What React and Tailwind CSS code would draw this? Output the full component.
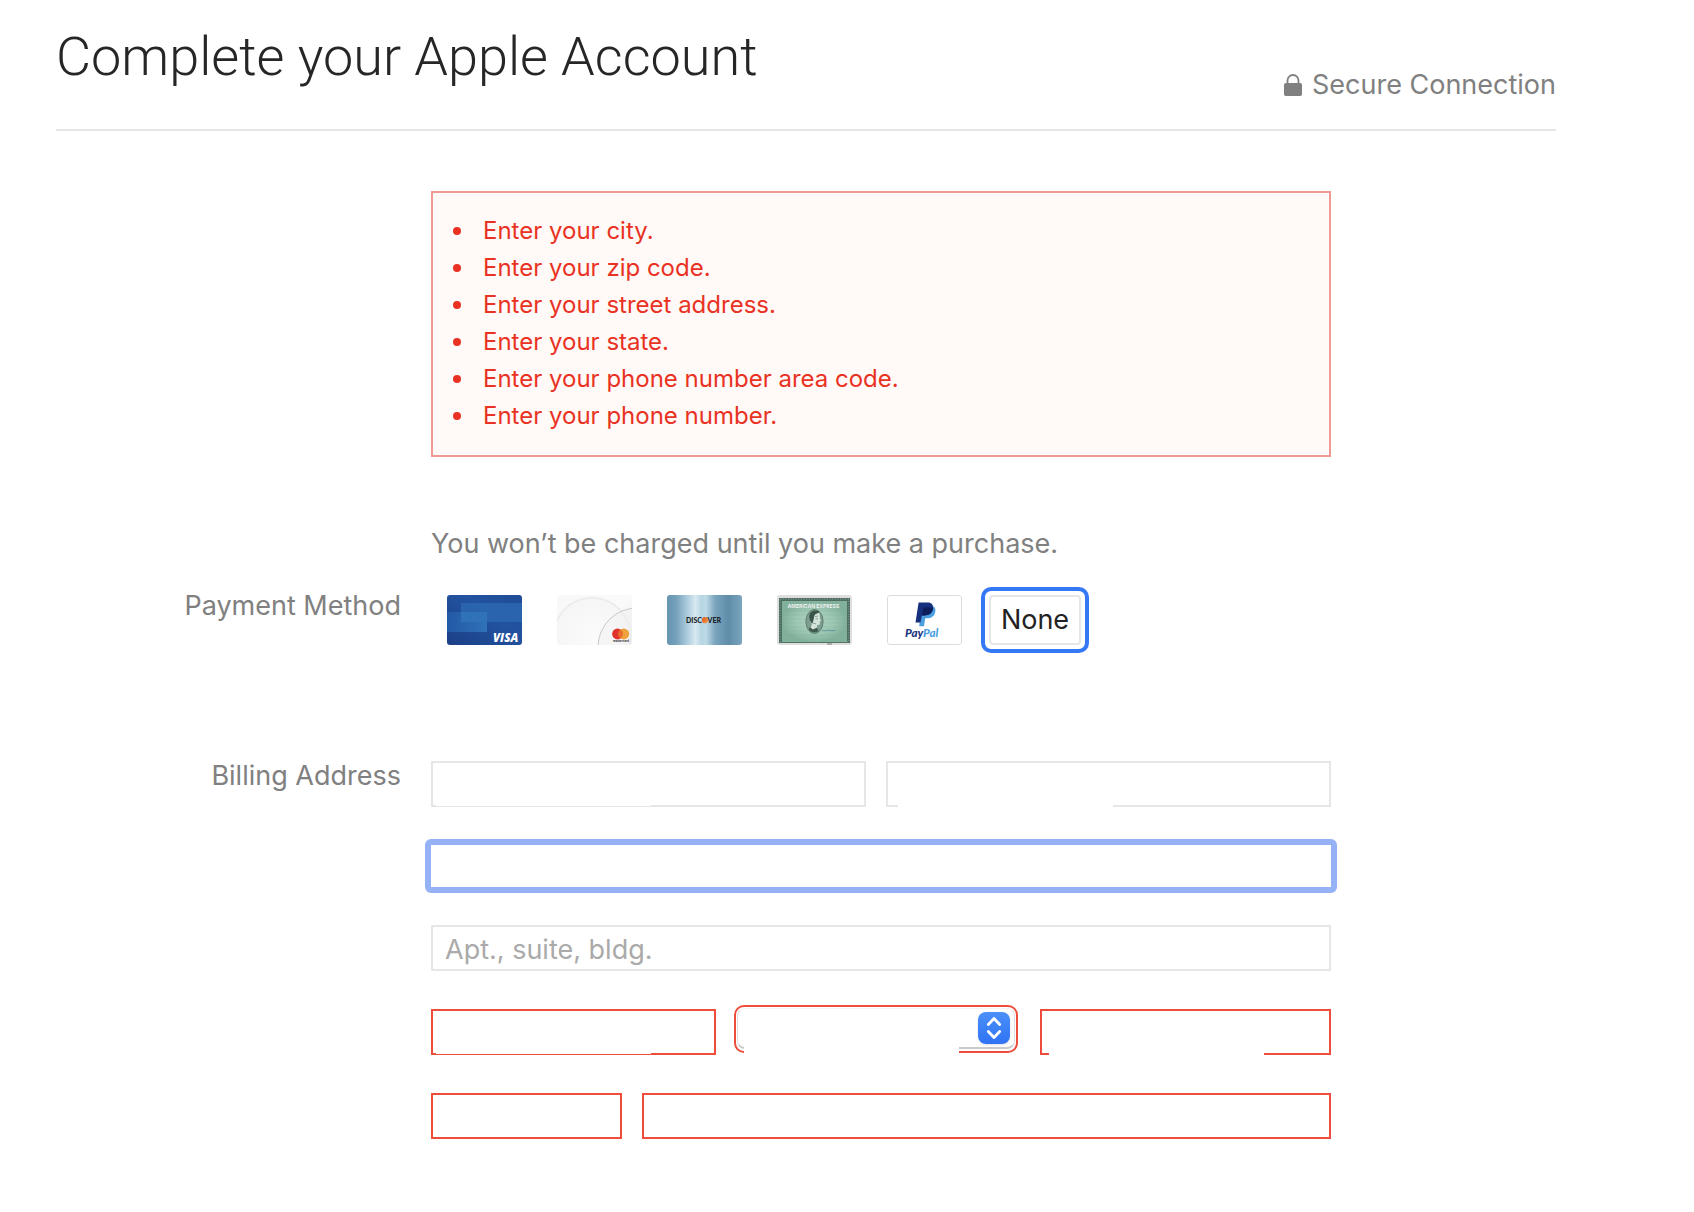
import React from "react";

const errors = [
  "Enter your city.",
  "Enter your zip code.",
  "Enter your street address.",
  "Enter your state.",
  "Enter your phone number area code.",
  "Enter your phone number.",
];

const VisaCard = () => (
  <svg viewBox="0 0 75 50" className="block h-[50px] w-[75px] rounded-[3px]" aria-hidden="true">
    <defs>
      <linearGradient id="visa-bg" x1="0" y1="1" x2="1" y2="0">
        <stop offset="0" stopColor="#1b3f86" />
        <stop offset="0.6" stopColor="#2253a0" />
        <stop offset="1" stopColor="#1f4c96" />
      </linearGradient>
      <linearGradient id="visa-band" x1="0" y1="0" x2="1" y2="0">
        <stop offset="0" stopColor="#2358a6" />
        <stop offset="1" stopColor="#2f72b8" />
      </linearGradient>
    </defs>
    <rect width="75" height="50" fill="url(#visa-bg)" />
    <rect x="14" y="8" width="61" height="19" fill="#2a64ae" />
    <rect x="0" y="17" width="40" height="20" fill="url(#visa-band)" />
    <rect x="14" y="17" width="26" height="10" fill="#2f72b8" />
    <text x="46" y="47" fill="#fff" fontFamily="Open Sans, sans-serif" fontSize="11.5" fontWeight="800" fontStyle="italic">VISA</text>
  </svg>
);

const MastercardCard = () => (
  <svg viewBox="0 0 75 50" className="block h-[50px] w-[75px] rounded-[3px]" aria-hidden="true">
    <defs>
      <linearGradient id="mc-bg" x1="0" y1="0" x2="1" y2="1">
        <stop offset="0" stopColor="#f8f8f8" />
        <stop offset="0.5" stopColor="#fafafa" />
        <stop offset="1" stopColor="#ececec" />
      </linearGradient>
      <radialGradient id="mc-disc">
        <stop offset="0" stopColor="#fbfbfb" />
        <stop offset="0.94" stopColor="#f6f6f6" />
        <stop offset="1" stopColor="#e4e4e4" />
      </radialGradient>
    </defs>
    <rect width="75" height="50" fill="url(#mc-bg)" />
    <circle cx="35" cy="41" r="39" fill="url(#mc-disc)" />
    <circle cx="80" cy="52" r="39" fill="#f1f1f1" fillOpacity="0.4" stroke="#b5b5b5" strokeWidth="0.7" />
    <circle cx="60.5" cy="39" r="5.4" fill="#e0322b" />
    <circle cx="66.8" cy="39" r="5.4" fill="#efa13b" />
    <path d="M63.65 34.6a5.4 5.4 0 0 1 0 8.8a5.4 5.4 0 0 1 0-8.8z" fill="#ea6a2c" />
    <text x="56" y="47" fill="#333" fontFamily="Open Sans, sans-serif" fontSize="2.8" fontWeight="700">mastercard</text>
  </svg>
);

const DiscoverCard = () => (
  <svg viewBox="0 0 75 50" className="block h-[50px] w-[75px] rounded-[3px]" aria-hidden="true">
    <defs>
      <linearGradient id="disc-bg" x1="0" y1="0" x2="1" y2="0">
        <stop offset="0" stopColor="#6695b2" />
        <stop offset="0.12" stopColor="#74a1bb" />
        <stop offset="0.25" stopColor="#a4c6d8" />
        <stop offset="0.38" stopColor="#d8e9f1" />
        <stop offset="0.46" stopColor="#b6d5e3" />
        <stop offset="0.52" stopColor="#bddae6" />
        <stop offset="0.64" stopColor="#7ba5be" />
        <stop offset="0.82" stopColor="#5f8ca9" />
        <stop offset="1" stopColor="#79a5bd" />
      </linearGradient>
      <linearGradient id="disc-o" x1="0" y1="0" x2="1" y2="1">
        <stop offset="0" stopColor="#d9531e" />
        <stop offset="1" stopColor="#f6a04d" />
      </linearGradient>
    </defs>
    <rect width="75" height="50" fill="url(#disc-bg)" />
    <g fill="#1d2327" fontFamily="Lato, sans-serif" fontSize="7" fontWeight="900">
      <text x="19" y="28">DISC</text>
      <text x="40.5" y="28">VER</text>
    </g>
    <circle cx="38" cy="25.2" r="3.1" fill="url(#disc-o)" />
  </svg>
);

const AmexCard = () => (
  <svg viewBox="0 0 75 50" className="block h-[50px] w-[75px] rounded-[3px]" aria-hidden="true">
    <defs>
      <radialGradient id="amex-bg">
        <stop offset="0" stopColor="#b4d6c7" />
        <stop offset="0.6" stopColor="#9cc7b2" />
        <stop offset="1" stopColor="#82b19b" />
      </radialGradient>
    </defs>
    <rect width="75" height="50" fill="#dedede" />
    <rect x="2" y="3" width="71" height="45" fill="#4d6e60" />
    <rect x="3.2" y="4.2" width="68.6" height="42.6" fill="none" stroke="#86a899" strokeWidth="1" strokeDasharray="1 1.6" />
    <rect x="5" y="6" width="65" height="41" fill="url(#amex-bg)" />
    <path d="M5 16h65M5 20h65M5 24h65M5 28h65M5 32h65M5 36h65M5 40h65" stroke="#7fae98" strokeWidth="0.4" opacity="0.6" />
    <text x="10.5" y="13" fill="#fff" stroke="#6c9481" strokeWidth="0.15" fontFamily="Inter, sans-serif" fontSize="5" fontWeight="800">AMERICAN EXPRESS</text>
    <ellipse cx="37.5" cy="26.5" rx="8.6" ry="12" fill="#7d9d8f" stroke="#4f6e60" strokeWidth="0.8" />
    <path d="M33 18c2-3 7-3.500 9-.5c1.500 2 .5 4 1 6l1 2.500l-1.300.6l.2 2.500c-.5 1.200-2 .8-3 .8l.6 3.600c-2 2-5 1.600-7-.3l1.500-4.200c-2.500-3-3.500-7.500-2-11z" fill="#d4e4da" />
    <path d="M32.500 19c2-4 8-5 10-1.500l-2.500 1c-2 .2-3 2-3 4.500l-1.500 5.500c-3-2-4-6-3-9.500z" fill="#3a544a" />
    <path d="M32.500 32l3.500 2.500l4-2l1.500 3.500c-3 2-7 1.500-9.500-1z" fill="#3f5a4e" />
    <path d="M38 21.500l3-.4M38.500 24l2.500-.3M36 28l3 1" stroke="#54705f" strokeWidth="0.6" />
    <path d="M45 36c2-1.500 3 .5 5-.5s3 .8 8-.3" fill="none" stroke="#4b7f95" strokeWidth="0.7" />
    <path d="M50 49h5" stroke="#555" strokeWidth="0.7" />
  </svg>
);

const PayPalCard = () => (
  <svg viewBox="0 0 75 50" className="block h-[50px] w-[75px] rounded-[3px]" aria-hidden="true">
    <rect x="0.5" y="0.5" width="74" height="49" rx="2.500" fill="#fff" stroke="#dcdcdc" />
    <path d="M34.400 10.500h9c4 0 5.800 3 4.800 6.800c-1 4.200-4 6-8 6h-2l-1.200 7.900h-4.800z" fill="#4a9fe0" />
    <path d="M31.600 7.500h8.800c4.400 0 6.400 2.600 5.400 6.700c-1 4.500-4.200 6.200-8.400 6.200h-2.600l-1.300 7.200h-5z" fill="#16307d" />
    <path d="M36.300 12.500h6.700c1.500 0 2.600.5 3.200 1.300c-.9 4.700-4.300 6.600-8.800 6.600h-2.500z" fill="#0c1f5c" />
    <text x="18" y="42" fontFamily="Lato, sans-serif" fontSize="11.5" fontWeight="900" fontStyle="italic">
      <tspan fill="#1b3580">Pay</tspan>
      <tspan fill="#4a9fe0">Pal</tspan>
    </text>
  </svg>
);

const cards = [
  { id: "visa", name: "Visa", Art: VisaCard },
  { id: "mastercard", name: "Mastercard", Art: MastercardCard },
  { id: "discover", name: "Discover", Art: DiscoverCard },
  { id: "amex", name: "American Express", Art: AmexCard },
  { id: "paypal", name: "PayPal", Art: PayPalCard },
];

const Field = ({ label, className = "", invalid, placeholder, children }) => (
  <div className={`relative min-w-0 ${className}`}>
    <input
      type="text"
      aria-label={label}
      aria-invalid={invalid}
      placeholder={placeholder}
      className={`block h-[46px] w-full border-2 bg-white px-3 pt-0.5 text-[27px] text-[#222] outline-none placeholder:text-[#aaa] ${
        invalid ? "border-[#ee4d3c]" : "border-[#e6e6e6]"
      }`}
    />
    {children}
  </div>
);

const App = () => {
  return (
    <div className="mr-[138px] ml-14 bg-white pb-16 font-[Inter,sans-serif] text-[27px] leading-9 text-[#808080]">
      <header className="flex items-end justify-between border-b-2 border-[#e5e5e5] pt-[25px] pb-[26px]">
        <h1 className="mb-[14px] font-[Roboto,sans-serif] text-[54px] leading-[64px] font-light text-[#262626]">
          Complete your Apple Account
        </h1>
        <p className="flex items-center gap-2.5">
          <svg viewBox="0 0 18 22" className="h-[22px] w-[18px]" aria-hidden="true">
            <path d="M3.500 9.500V6.500a5.500 5.500 0 0 1 11 0v3" fill="none" stroke="#808080" strokeWidth="1.800" />
            <rect y="9" width="18" height="13" rx="1.800" fill="#808080" />
          </svg>
          Secure Connection
        </p>
      </header>

      <form className="grid grid-cols-[25%_60%]">
        <ul
          role="alert"
          className="col-start-2 mt-[60px] border-2 border-[#ef9a94] bg-[#fff9f7] pt-[19px] pb-[21px] pl-5 text-2xl leading-[37px] text-[#e93223]"
        >
          {errors.map((error) => (
            <li key={error} className="flex items-center before:mr-[22px] before:size-2 before:rounded-full before:bg-current">
              {error}
            </li>
          ))}
        </ul>

        <p className="col-start-2 mt-[69px]">You won’t be charged until you make a purchase.</p>

        <h2 id="payment-label" className="mt-[26px] pr-[30px] text-right">
          Payment Method
        </h2>
        <div role="radiogroup" aria-labelledby="payment-label" className="mt-[25px] flex gap-[19px] pl-2">
          {cards.map(({ id, name, Art }) => (
            <label key={id} className="relative rounded-[10px] border-4 border-transparent p-1 has-checked:border-[#3478f6]">
              <input type="radio" name="payment" value={id} aria-label={name} className="sr-only" />
              <Art />
            </label>
          ))}
          <label className="relative -ml-2 rounded-[10px] border-4 border-transparent p-1 has-checked:border-[#3478f6]">
            <input type="radio" name="payment" value="none" defaultChecked className="sr-only" />
            <span className="flex h-[50px] w-[92px] items-center justify-center rounded border-2 border-[#e6e6e6] text-[#222]">
              None
            </span>
          </label>
        </div>

        <h2 className="mt-[105px] pr-[30px] text-right">Billing Address</h2>
        <div className="mt-[108px] flex flex-col gap-[38px]">
          <div className="flex flex-col gap-9">
            <div className="flex gap-5">
              <Field label="First name" className="flex-[435]">
                <span className="absolute bottom-px left-[5px] h-px w-[215px] bg-white" />
              </Field>
              <Field label="Last name" className="flex-[445]">
                <span className="absolute bottom-0 left-3 h-0.5 w-[215px] bg-white" />
              </Field>
            </div>

            <div className="-mx-1.5 -my-1">
              <input
                type="text"
                aria-label="Street address"
                className="block h-[54px] w-full rounded-[6px] border-6 border-[#95b2f7] bg-white px-3 text-[#222] outline-none"
              />
            </div>

            <Field label="Apt., suite, bldg." placeholder="Apt., suite, bldg." />
          </div>

          <div className="flex items-start">
            <Field label="City" invalid className="mr-[18px] flex-[285]">
              <span className="absolute bottom-px left-[5px] h-px w-[215px] bg-white" />
            </Field>

            <div className="relative -mt-1 mr-[22px] h-12 min-w-0 flex-[278] rounded-[10px] border-2 border-[#ee4d3c] p-px pb-[2px]">
              <select
                aria-label="State"
                defaultValue=""
                className="block size-full appearance-none rounded-[8px] border border-b-2 border-x-[#dedede] border-t-[#f4f4f4] border-b-[#c9c9c9] bg-white px-3 outline-none"
              >
                <option value=""></option>
              </select>
              <span className="pointer-events-none absolute top-[5px] right-1.5 flex size-8 items-center justify-center rounded-[8px] bg-linear-to-b from-[#4b90f7] to-[#2f72f5] shadow-sm">
                <svg viewBox="0 0 32 32" className="size-8" fill="none" stroke="#fff" strokeWidth="2.800" strokeLinecap="round" strokeLinejoin="round" aria-hidden="true">
                  <path d="M10.300 12.500L16 6.500l5.700 6M10.300 19.500l5.700 6l5.700-6" />
                </svg>
              </span>
              <span className="absolute -bottom-0.5 left-2 h-[7px] w-[215px] bg-white" />
            </div>

            <Field label="Zip code" invalid className="flex-[291]">
              <span className="absolute bottom-0 left-[9px] h-0.5 w-[215px] bg-white" />
            </Field>
          </div>

          <div className="flex gap-5">
            <Field label="Area code" invalid className="flex-[191]" />
            <Field label="Phone number" invalid className="flex-[689]" />
          </div>
        </div>
      </form>
    </div>
  );
};

export default App;
